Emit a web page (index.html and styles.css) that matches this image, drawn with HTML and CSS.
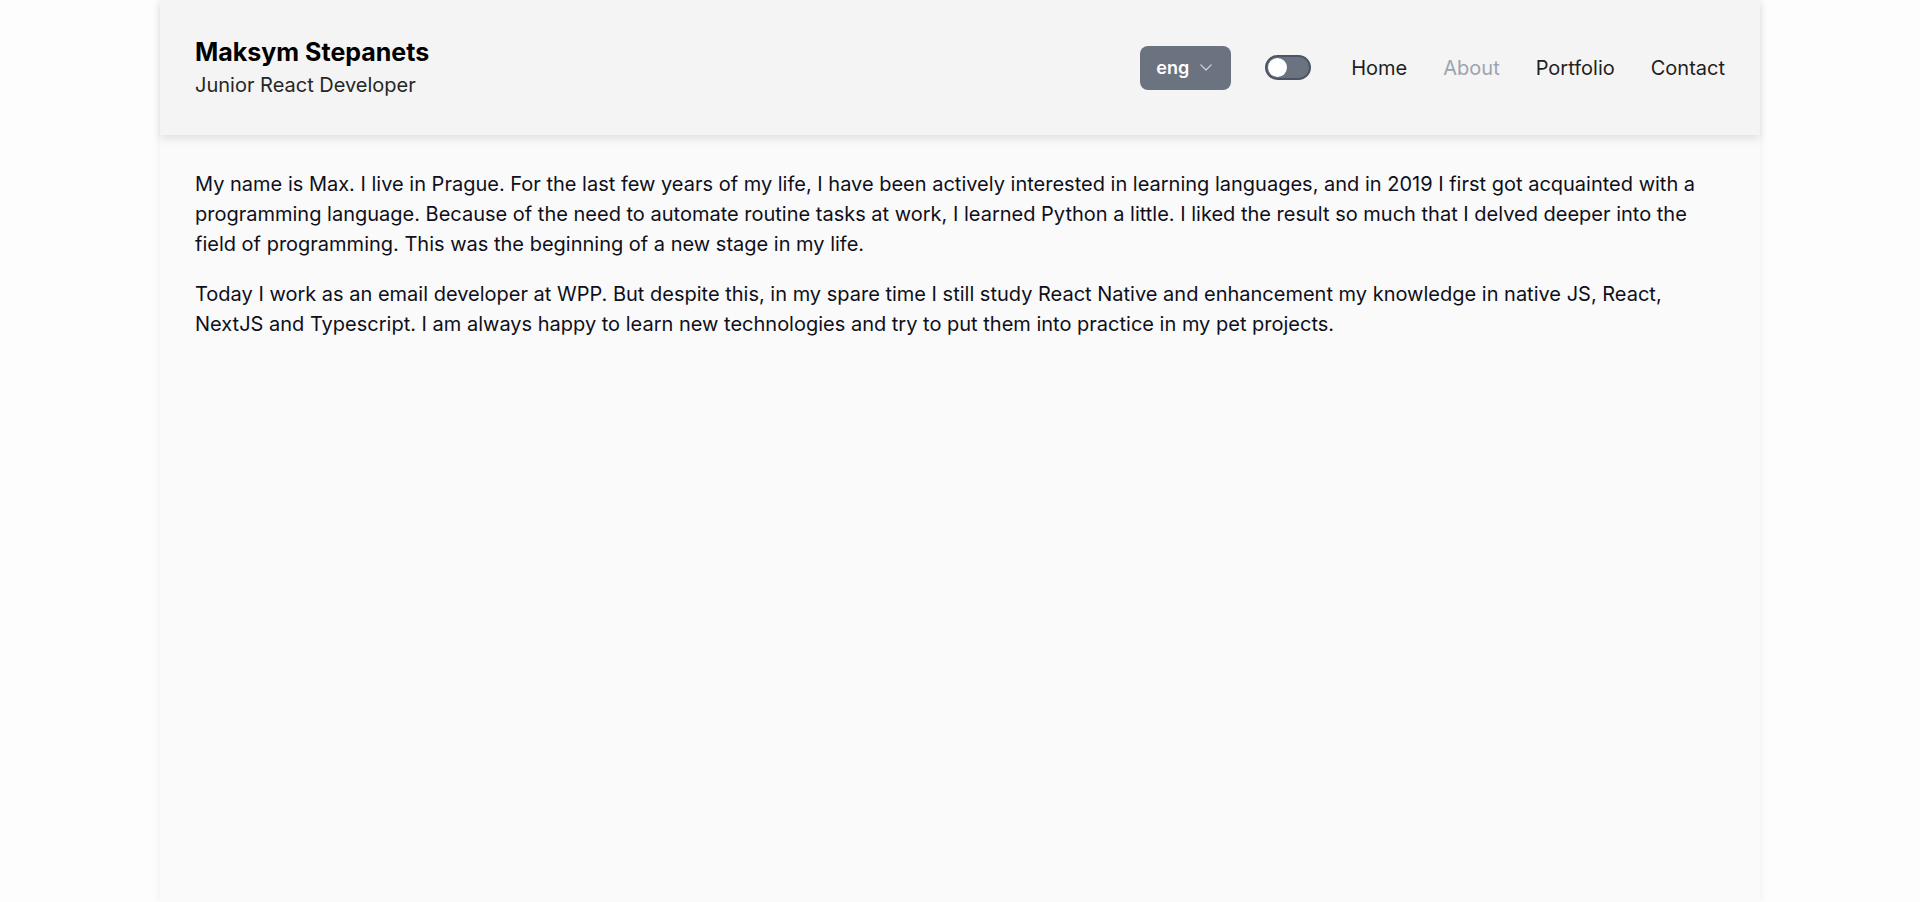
FILE: index.html
```html
<!DOCTYPE html>
<html lang="en">
<head>
<meta charset="utf-8">
<title>Maksym Stepanets — About</title>
<link rel="stylesheet" href="styles.css">
</head>
<body>
<div class="page">
  <header class="header">
    <div class="brand">
      <div class="brand-name">Maksym Stepanets</div>
      <div class="brand-role">Junior React Developer</div>
    </div>
    <nav class="nav">
      <div class="controls">
        <button class="lang" type="button">
          <span class="lang-text">eng</span>
          <svg class="lang-chevron" width="12" height="7" viewBox="0 0 12 7" fill="none">
            <path d="M0.8 0.8 L6 6 L11.2 0.8" stroke="currentColor" stroke-width="1.2" stroke-linecap="round" stroke-linejoin="round"/>
          </svg>
        </button>
        <span class="toggle"><span class="toggle-knob"></span></span>
      </div>
      <a class="nav-link" href="#">Home</a>
      <a class="nav-link nav-link-active" href="#">About</a>
      <a class="nav-link" href="#">Portfolio</a>
      <a class="nav-link" href="#">Contact</a>
    </nav>
  </header>
  <main class="content">
    <p class="text">My name is Max. I live in Prague. For the last few years of my life, I have been actively interested in learning languages, and in 2019 I first got acquainted with a programming language. Because of the need to automate routine tasks at work, I learned Python a little. I liked the result so much that I delved deeper into the field of programming. This was the beginning of a new stage in my life.</p>
    <p class="text">Today I work as an email developer at WPP. But despite this, in my spare time I still study React Native and enhancement my knowledge in native JS, React, NextJS and Typescript. I am always happy to learn new technologies and try to put them into practice in my pet projects.</p>
  </main>
</div>
</body>
</html>
```

FILE: styles.css
```css
* {
  box-sizing: border-box;
}

html, body {
  margin: 0;
  padding: 0;
}

body {
  background: #fdfdfd;
  font-family: Inter, "Noto Sans", sans-serif;
  color: #111827;
}

.page {
  max-width: 1600px;
  margin: 0 auto;
  min-height: 100vh;
  background: #fafafa;
  box-shadow: 0 0 8px rgba(0, 0, 0, 0.07);
  display: flex;
  flex-direction: column;
}

.header {
  height: 135px;
  padding: 0 35px;
  background: #f4f4f4;
  display: flex;
  align-items: center;
  justify-content: space-between;
  box-shadow: 0 4px 8px rgba(0, 0, 0, 0.1);
  position: relative;
  z-index: 1;
}

.brand {
  display: flex;
  flex-direction: column;
}

.brand-name {
  font-size: 25px;
  line-height: 30px;
  font-weight: 700;
  color: #000;
}

.brand-role {
  margin-top: 4px;
  font-size: 20px;
  line-height: 28px;
  color: #262626;
}

.nav {
  display: flex;
  align-items: center;
  gap: 36px;
}

.controls {
  display: flex;
  align-items: center;
  gap: 34px;
  margin-right: 4px;
}

.lang {
  height: 44px;
  width: 91px;
  padding: 0 16px;
  border: none;
  border-radius: 8px;
  background: #6b7280;
  color: #fff;
  display: flex;
  align-items: center;
  justify-content: space-between;
  font-family: inherit;
  font-size: 18px;
  font-weight: 600;
}

.lang-chevron {
  color: #d1d5db;
  margin-right: 3px;
}

.toggle {
  width: 46px;
  height: 25px;
  border-radius: 13px;
  background: #6b7280;
  border: 2px solid #4b5563;
  display: flex;
  align-items: center;
  padding-left: 1px;
}

.toggle-knob {
  width: 19px;
  height: 19px;
  border-radius: 50%;
  background: #fff;
}

.nav-link {
  font-size: 20px;
  line-height: 28px;
  color: #1f1f1f;
  text-decoration: none;
}

.nav-link-active {
  color: #9ca3af;
}

.content {
  padding: 34px 35px;
}

.text {
  margin: 0 0 20px;
  font-size: 20px;
  line-height: 30px;
  color: #0f0f1a;
}
```
